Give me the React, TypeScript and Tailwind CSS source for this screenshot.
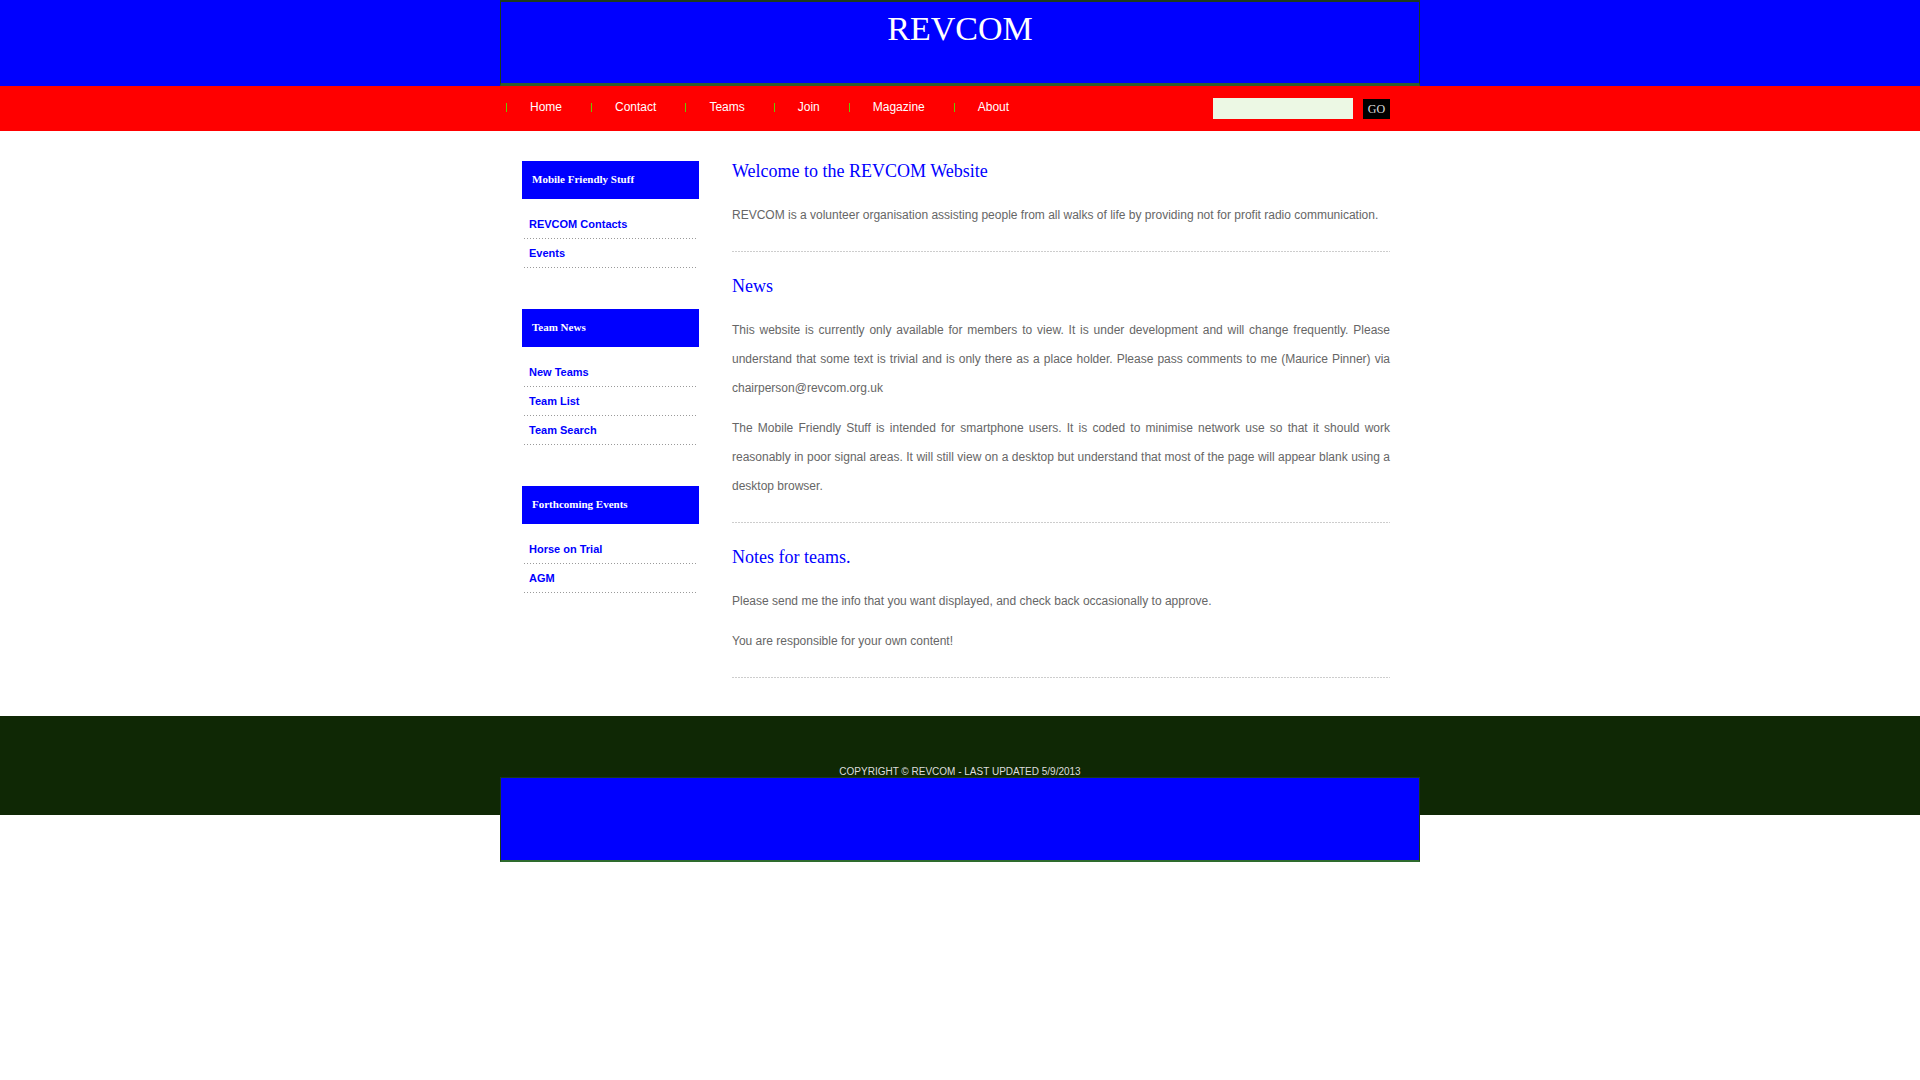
import React from "react";

const navItems = ["Home", "Contact", "Teams", "Join", "Magazine", "About"];

const sidebar = [
  { title: "Mobile Friendly Stuff", links: ["REVCOM Contacts", "Events"] },
  { title: "Team News", links: ["New Teams", "Team List", "Team Search"] },
  { title: "Forthcoming Events", links: ["Horse on Trial", "AGM"] },
];

const sections = [
  {
    title: "Welcome to the REVCOM Website",
    paras: [
      "REVCOM is a volunteer organisation assisting people from all walks of life by providing not for profit radio communication.",
    ],
  },
  {
    title: "News",
    paras: [
      "This website is currently only available for members to view. It is under development and will change frequently. Please understand that some text is trivial and is only there as a place holder. Please pass comments to me (Maurice Pinner) via chairperson@revcom.org.uk",
      "The Mobile Friendly Stuff is intended for smartphone users. It is coded to minimise network use so that it should work reasonably in poor signal areas. It will still view on a desktop but understand that most of the page will appear blank using a desktop browser.",
    ],
  },
  {
    title: "Notes for teams.",
    paras: [
      "Please send me the info that you want displayed, and check back occasionally to approve.",
      "You are responsible for your own content!",
    ],
  },
];

// 1px dots with 2px gaps along the bottom edge
const dotted =
  "bg-[linear-gradient(to_right,#9a9a9a_1px,transparent_1px)] bg-[length:3px_1px] bg-repeat-x bg-bottom";

export default function App() {
  return (
    <div className="min-h-screen bg-white font-['Liberation_Sans',Arial,sans-serif]">
      {/* Header */}
      <header className="bg-[#0000ff]">
        <div className="mx-auto w-[920px] h-[86px] border-x border-[#1c3a1c] border-t-2 border-t-[#1c3a1c] border-b-[3px] border-b-[#2e5e2e] pt-[10px] text-center">
          <h1 className="text-[34px] leading-[34px] text-white font-['Liberation_Serif','Times_New_Roman',serif]">
            REVCOM
          </h1>
        </div>
      </header>

      {/* Nav */}
      <nav className="bg-[#ff0000] h-[45px]">
        <div className="mx-auto w-[920px] h-full flex items-center pl-[6px] pr-[30px]">
          <ul className="flex items-center pb-[3px]">
            {navItems.map((item) => (
              <li key={item} className="flex items-center">
                <span className="w-px h-[9px] bg-[#66cc00]" />
                <a href="#" className="pl-[23px] pr-[29px] text-[12px] leading-[14px] text-white">
                  {item}
                </a>
              </li>
            ))}
          </ul>
          <form className="ml-auto flex items-center gap-[10px]" onSubmit={(e) => e.preventDefault()}>
            <input type="text" className="w-[140px] h-[21px] bg-[#ecf8e4] outline-none px-1 text-[12px]" />
            <button
              type="submit"
              className="w-[27px] h-[20px] bg-black text-[#dddddd] text-[12px] leading-[20px] font-['Liberation_Serif','Times_New_Roman',serif]"
            >
              GO
            </button>
          </form>
        </div>
      </nav>

      {/* Main */}
      <main className="mx-auto w-[920px] flex items-start pt-[28px] pb-[16px]">
        <aside className="ml-[22px] mt-[2px] w-[177px]">
          {sidebar.map((block) => (
            <div key={block.title} className="mb-[41px]">
              <div className="h-[38px] bg-[#0000ff] pl-[10px] pb-[2px] flex items-center text-white text-[11px] font-bold font-['Liberation_Serif','Times_New_Roman',serif]">
                {block.title}
              </div>
              <ul className="mt-[11px] w-[175px]">
                {block.links.map((link) => (
                  <li key={link} className={`pb-px ${dotted}`}>
                    <a href="#" className="block pl-[7px] leading-[28px] text-[11px] font-bold text-[#0000ff]">
                      {link}
                    </a>
                  </li>
                ))}
              </ul>
            </div>
          ))}
        </aside>

        <div className="ml-[33px] w-[658px]">
          {sections.map((s) => (
            <section key={s.title} className={`mb-[22px] pb-[11px] ${dotted}`}>
              <h2 className="mb-[18px] text-[18px] leading-[24px] text-[#0000ff] font-['Liberation_Serif','Times_New_Roman',serif]">
                {s.title}
              </h2>
              {s.paras.map((p, i) => (
                <p
                  key={i}
                  className="mb-[11px] text-[12px] leading-[29px] text-[#666666] text-justify font-['Liberation_Sans_Narrow','Arial_Narrow',sans-serif]"
                >
                  {p}
                </p>
              ))}
            </section>
          ))}
        </div>
      </main>

      {/* Footer */}
      <footer className="bg-[#0f2805] h-[99px] pt-[50px]">
        <p className="text-center text-[10px] leading-[11px] text-[#dddddd]">
          COPYRIGHT © REVCOM - LAST UPDATED 5/9/2013
        </p>
        <div className="mx-auto w-[920px] h-[85px] bg-[#0000ff] border border-[#1c3a1c] border-b-2 border-b-[#2e6b2e]" />
      </footer>
    </div>
  );
}
